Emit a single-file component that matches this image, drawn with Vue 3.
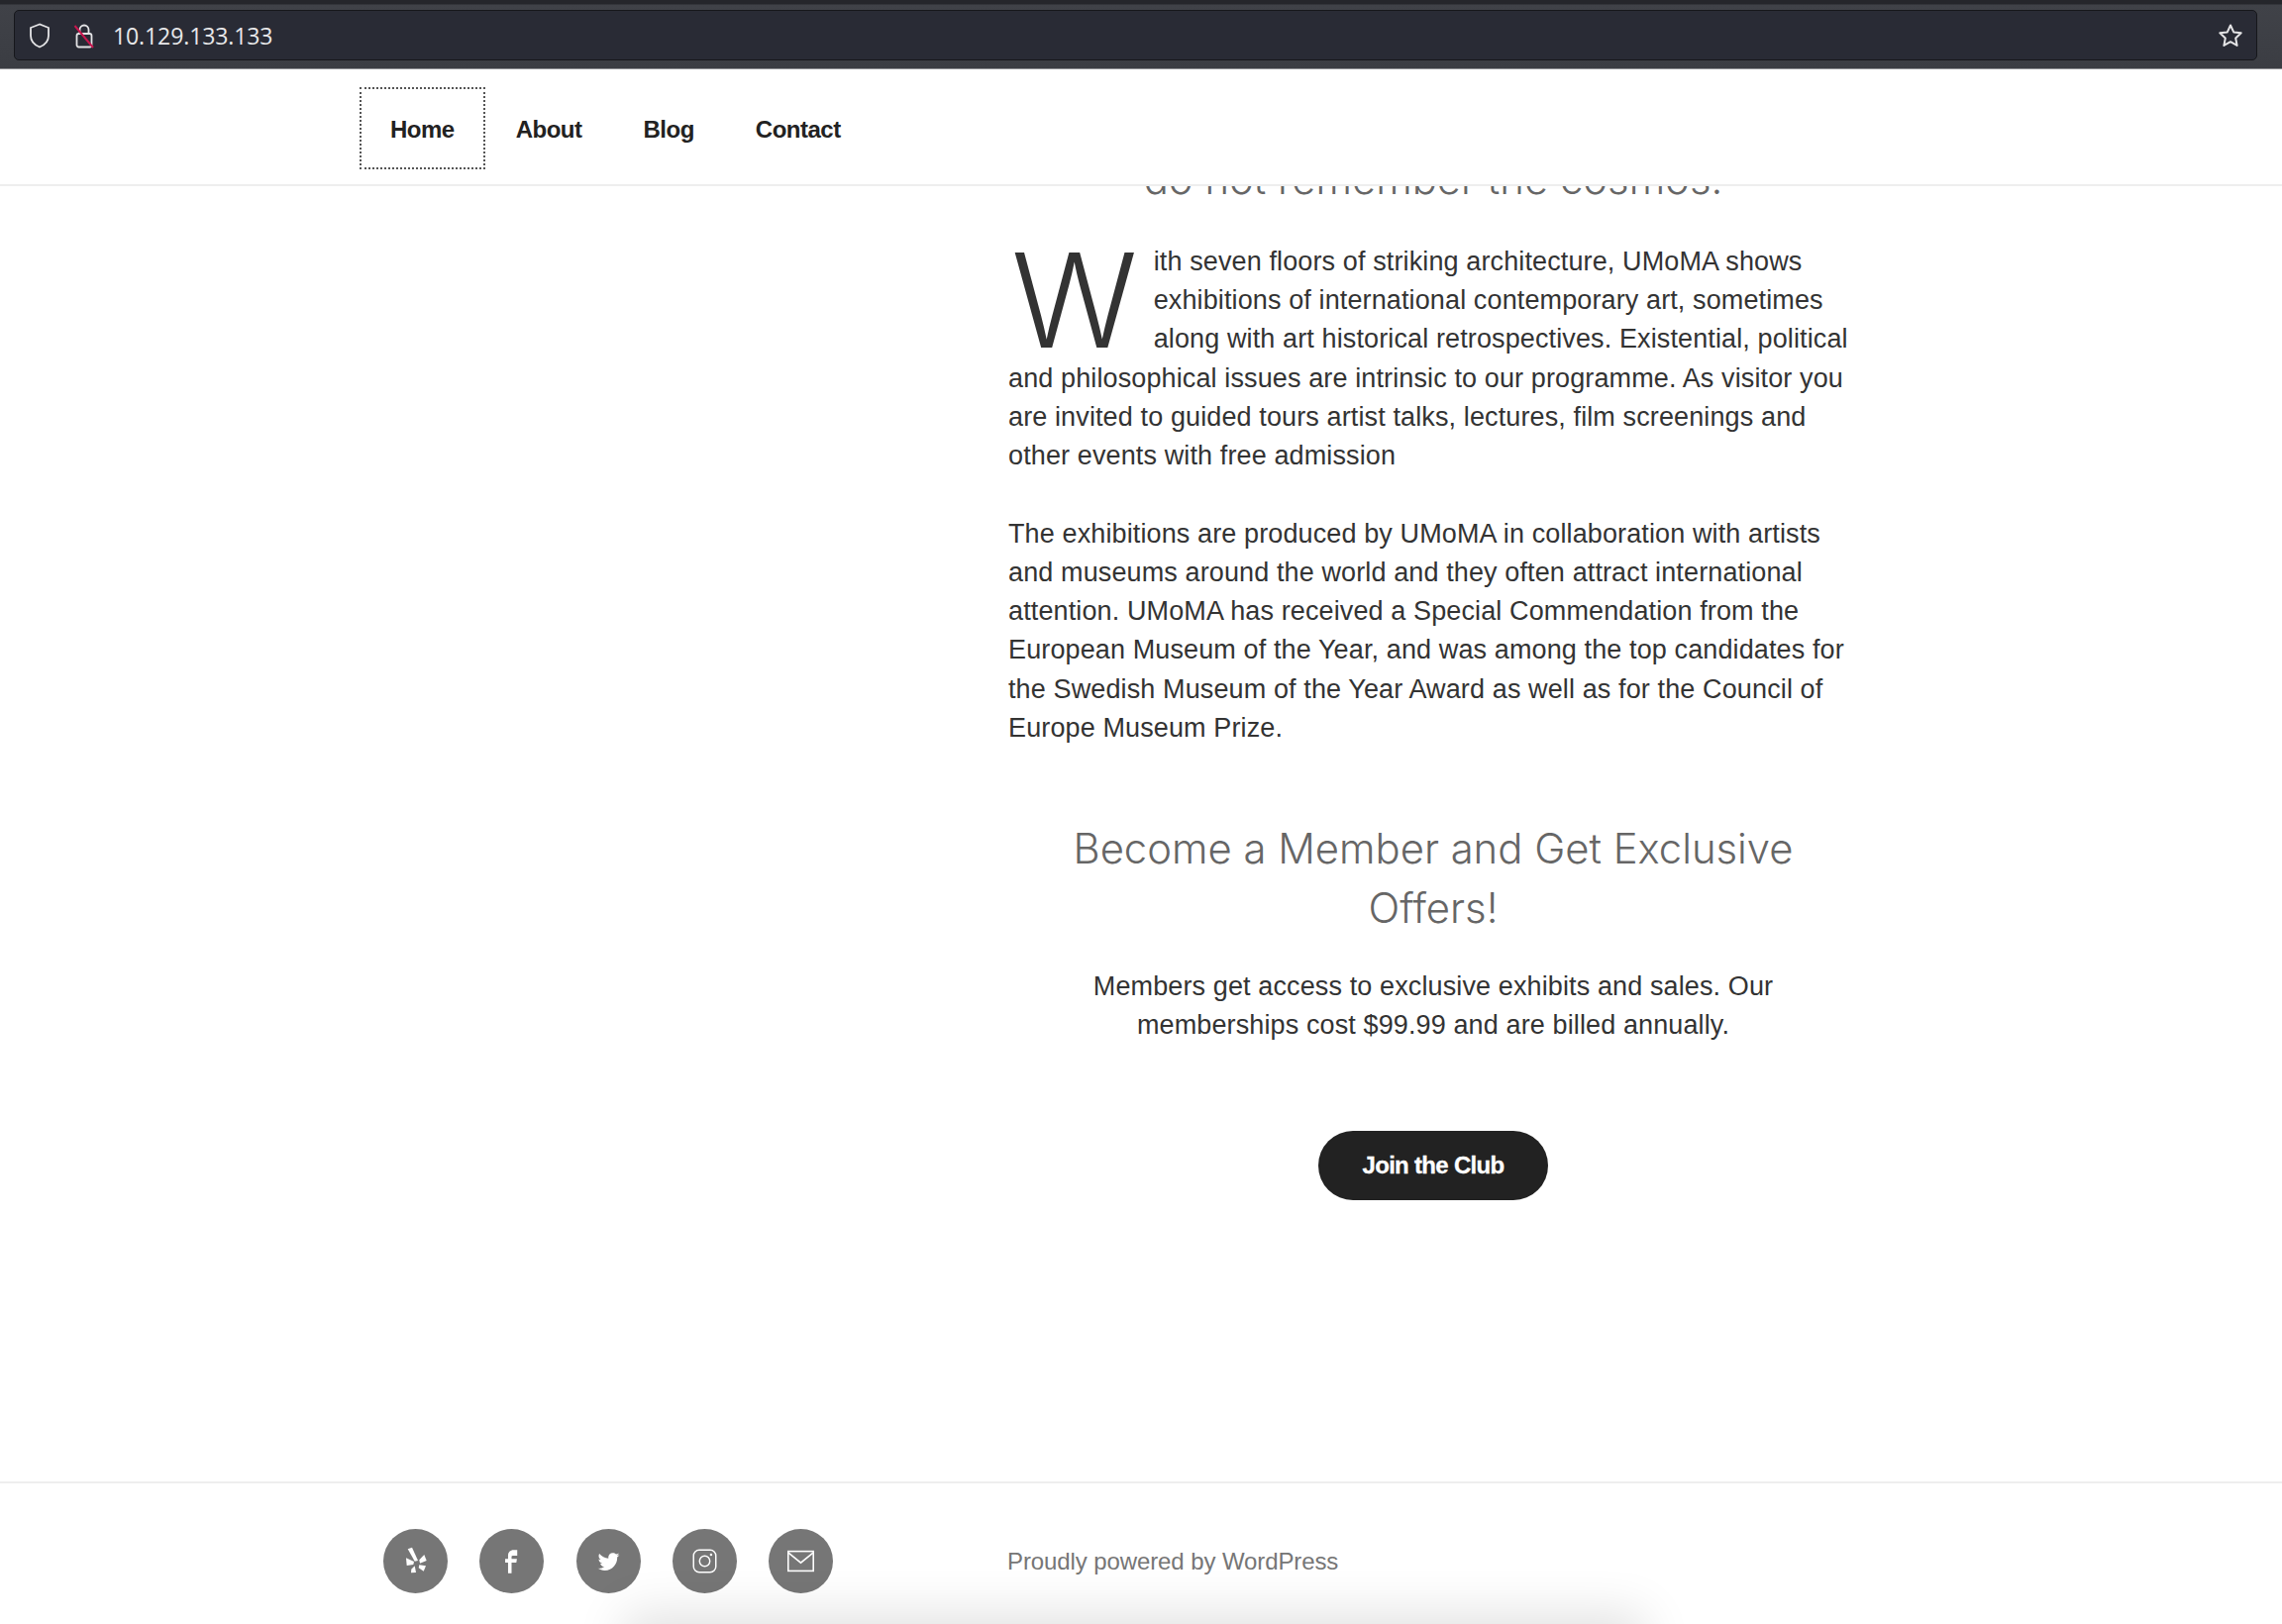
<template>
  <div class="page">
    <!-- browser chrome -->
    <div class="browser-bar">
      <div class="url-box">
        <svg class="shield" viewBox="0 0 24 26" fill="none" stroke="#e4e4e6" stroke-width="1.8">
          <path d="M12 1.5 3 5v8c0 5.5 4 9.5 9 11.5 5-2 9-6 9-11.5V5z" />
        </svg>
        <svg class="lock" viewBox="0 0 22 26" fill="none">
          <path d="M6.5 11V7a4.5 4.5 0 0 1 9 0v4" stroke="#e4e4e6" stroke-width="1.8" />
          <rect x="3.5" y="11" width="15" height="13.5" rx="2" stroke="#e4e4e6" stroke-width="1.8" />
          <path d="M1.5 3 20 25" stroke="#c8174f" stroke-width="2" />
        </svg>
        <span class="url">10.129.133.133</span>
        <svg class="star" viewBox="0 0 26 26" fill="none" stroke="#e4e4e6" stroke-width="2" stroke-linejoin="round">
          <path d="M13 2.5l3.2 6.9 7.5.9-5.5 5.2 1.4 7.4-6.6-3.7-6.6 3.7 1.4-7.4-5.5-5.2 7.5-.9z" />
        </svg>
      </div>
    </div>

    <nav class="site-nav">
      <a v-for="item in navItems" :key="item" class="nav-link" :class="{ focused: item === 'Home' }">{{ item }}</a>
    </nav>

    <main class="content">
      <h2 class="heading">do not remember the cosmos.</h2>
      <p class="para first">
        <span class="dropcap">W</span>ith seven floors of striking architecture, UMoMA shows<br />
        exhibitions of international contemporary art, sometimes<br />
        along with art historical retrospectives. Existential, political<br />
        and philosophical issues are intrinsic to our programme. As visitor you<br />
        are invited to guided tours artist talks, lectures, film screenings and<br />
        other events with free admission
      </p>
      <p class="para second">
        The exhibitions are produced by UMoMA in collaboration with artists<br />
        and museums around the world and they often attract international<br />
        attention. UMoMA has received a Special Commendation from the<br />
        European Museum of the Year, and was among the top candidates for<br />
        the Swedish Museum of the Year Award as well as for the Council of<br />
        Europe Museum Prize.
      </p>
      <h2 class="heading member">Become a Member and Get Exclusive<br />Offers!</h2>
      <p class="para centered">
        Members get access to exclusive exhibits and sales. Our<br />
        memberships cost $99.99 and are billed annually.
      </p>
      <div class="btn-row">
        <a class="join-btn">Join the Club</a>
      </div>
    </main>

    <footer class="site-footer">
      <div class="socials">
        <a class="social yelp">
          <svg viewBox="0 -2 24 28" fill="#fff">
            <path d="M3.7.3 8-1.3 14 12l-3.3.7z" />
            <path d="M2 9.3 10 13l-.7 3-6.6 1z" />
            <path d="M15.3 11.3 20.3 6l2.4 6-6.7 2.7z" />
            <path d="M15.3 16.3l6.7 1-2.3 5.4-5-3.4z" />
            <path d="M10.7 17.3 12 24l-5 .3.3-3.6z" />
          </svg>
        </a>
        <a class="social">
          <svg viewBox="0 0 24 24" fill="#fff">
            <path d="M14.2 6.8h3.3V1.2H14c-3.3 0-5.4 2.2-5.4 5.4v3.2H5.8v3.6h2.8v10.4h3.4V13.4h4.6l.6-3.6h-5.2V7.6c0-.5.4-.8 2.2-.8z" />
          </svg>
        </a>
        <a class="social">
          <svg viewBox="0 0 24 24" fill="#fff">
            <path d="M22.46 6c-.77.35-1.6.58-2.46.69.88-.53 1.56-1.37 1.88-2.38-.83.5-1.75.85-2.72 1.05C18.37 4.5 17.26 4 16 4c-2.35 0-4.27 1.92-4.27 4.29 0 .34.04.67.11.98C8.28 9.09 5.11 7.38 3 4.79c-.37.63-.58 1.37-.58 2.15 0 1.49.75 2.81 1.91 3.56-.71 0-1.37-.2-1.95-.5v.03c0 2.08 1.48 3.82 3.44 4.21a4.22 4.22 0 0 1-1.93.07 4.28 4.28 0 0 0 4 2.98 8.521 8.521 0 0 1-5.33 1.84c-.34 0-.68-.02-1.02-.06C3.44 20.29 5.7 21 8.12 21 16 21 20.33 14.46 20.33 8.79c0-.19 0-.37-.01-.56.84-.6 1.56-1.36 2.14-2.23z" />
          </svg>
        </a>
        <a class="social">
          <svg viewBox="0 0 24 24" fill="none" stroke="#fff" stroke-width="1.4">
            <rect x="1.2" y="1.2" width="21.6" height="21.6" rx="5.5" />
            <circle cx="12" cy="12" r="5" />
            <circle cx="18.2" cy="5.8" r="1.2" fill="#fff" stroke="none" />
          </svg>
        </a>
        <a class="social mail">
          <svg viewBox="0 0 24 24" fill="none" stroke="#fff" stroke-width="1.4">
            <rect x="0.7" y="3.2" width="22.6" height="17.6" />
            <path d="M1 4.5 12 13.5 23 4.5" />
          </svg>
        </a>
      </div>
      <span class="credit">Proudly powered by WordPress</span>
    </footer>
    <div class="bottom-shadow"></div>
  </div>
</template>

<script setup>
const navItems = ['Home', 'About', 'Blog', 'Contact'];
</script>

<style>
html,
body {
  margin: 0;
  overflow: hidden;
  background: #fff;
}
</style>

<style scoped>
.page {
  position: relative;
  width: 2304px;
  height: 1640px;
  overflow: hidden;
  background: #fff;
  font-family: "Liberation Sans", Arial, sans-serif;
  color: #333;
}

.browser-bar {
  height: 70px;
  box-sizing: border-box;
  padding: 10px 25px 8px 14px;
  background: linear-gradient(#25262b 0, #25262b 4px, #404248 5px, #3b3d43 100%);
  border-bottom: 1px solid #8c8d90;
}

.url-box {
  display: flex;
  align-items: center;
  height: 51px;
  box-sizing: border-box;
  padding: 0 13px 0 12px;
  background: #292b35;
  border: 1px solid #16171b;
  border-radius: 5px;
}

.shield {
  width: 26px;
  height: 26px;
}

.lock {
  width: 22px;
  height: 26px;
  margin-left: 21px;
}

.url {
  margin-left: 18px;
  font-family: "Open Sans", sans-serif;
  font-size: 23px;
  letter-spacing: -0.1px;
  color: #e8e8ea;
}

.star {
  width: 26px;
  height: 26px;
  margin-left: auto;
}

.site-nav {
  position: relative;
  z-index: 2;
  display: flex;
  align-items: center;
  height: 118px;
  box-sizing: border-box;
  padding: 3px 0 0 363px;
  background: #fff;
  border-bottom: 2px solid #eee;
}

.nav-link {
  padding: 3px 31px 0;
  font-size: 24px;
  font-weight: 700;
  letter-spacing: -0.5px;
  color: #222;
  line-height: 80px;
}

.nav-link.focused {
  outline: 2px dotted #555;
  outline-offset: -2px;
}

.content {
  width: 858px;
  margin: -37px 0 0 1018px;
}

.heading {
  margin: 0;
  font-family: Inter, "Liberation Sans", sans-serif;
  font-size: 41.8px;
  font-weight: 300;
  line-height: 60px;
  text-align: center;
  color: #666;
}

.para {
  margin: 30px 0 0;
  font-size: 27px;
  letter-spacing: 0.12px;
  line-height: 39.2px;
  color: #333;
}

.para.first {
  margin-top: 34px;
}

.para.second {
  margin-top: 39.6px;
}

.para.centered {
  text-align: center;
}

.heading.member {
  margin-top: 72px;
}

.dropcap {
  float: left;
  margin: 4px 16px 0 3px;
  font-family: Inter, "Liberation Sans", sans-serif;
  font-size: 132px;
  font-weight: 300;
  line-height: 108px;
  color: #333;
}

.btn-row {
  display: flex;
  justify-content: center;
  margin-top: 87px;
}

.join-btn {
  display: block;
  width: 232px;
  height: 70px;
  border-radius: 35px;
  background: #222;
  color: #fff;
  font-size: 24px;
  font-weight: 700;
  letter-spacing: -0.7px;
  -webkit-text-stroke: 0.3px #fff;
  line-height: 70px;
  text-align: center;
}

.site-footer {
  display: flex;
  align-items: center;
  margin-top: 283.5px;
  padding: 46px 0 0 387px;
  border-top: 2px solid #eee;
}

.socials {
  display: flex;
  gap: 32.3px;
  width: 630px;
}

.social {
  display: flex;
  align-items: center;
  justify-content: center;
  width: 65px;
  height: 65px;
  border-radius: 50%;
  background: #767676;
}

.social svg {
  width: 25px;
  height: 25px;
}

.social.yelp svg {
  width: 24px;
  height: 28px;
}

.social.mail svg {
  width: 27px;
  height: 27px;
}

.credit {
  position: relative;
  top: 1px;
  font-size: 24px;
  letter-spacing: -0.1px;
  color: #767676;
}

.bottom-shadow {
  position: absolute;
  left: 660px;
  bottom: -40px;
  width: 970px;
  height: 20px;
  box-shadow: 0 0 50px 30px rgba(0, 0, 0, 0.12);
}
</style>
